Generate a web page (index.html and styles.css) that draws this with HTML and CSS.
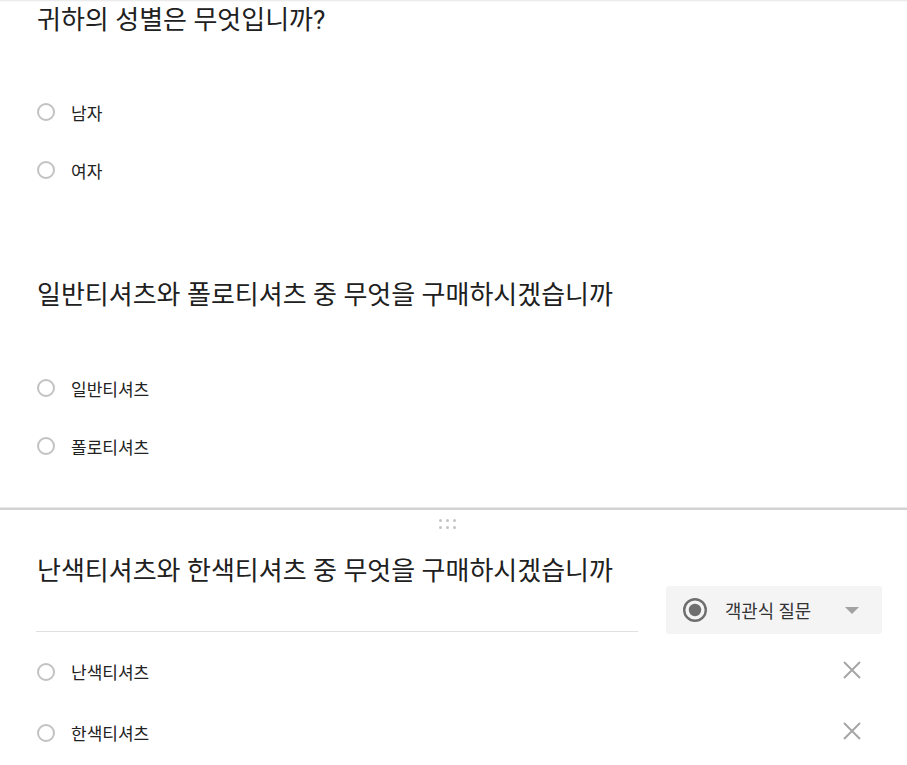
FILE: index.html
```html
<!DOCTYPE html>
<html lang="ko">
<head>
<meta charset="utf-8">
<title>설문</title>
<link rel="stylesheet" href="styles.css">
</head>
<body>
<div class="card card-top">
  <div class="question q1">
    <div class="q-title">귀하의 성별은 무엇입니까?</div>
    <div class="options">
      <div class="option"><span class="radio"></span><span class="label">남자</span></div>
      <div class="option"><span class="radio"></span><span class="label">여자</span></div>
    </div>
  </div>
  <div class="question q2">
    <div class="q-title">일반티셔츠와 폴로티셔츠 중 무엇을 구매하시겠습니까</div>
    <div class="options">
      <div class="option"><span class="radio"></span><span class="label">일반티셔츠</span></div>
      <div class="option"><span class="radio"></span><span class="label">폴로티셔츠</span></div>
    </div>
  </div>
</div>
<div class="divider"></div>
<div class="card card-active">
  <div class="handle">
    <span></span><span></span><span></span><span></span><span></span><span></span>
  </div>
  <div class="question q3">
    <div class="q-head">
      <div class="q-title-input">난색티셔츠와 한색티셔츠 중 무엇을 구매하시겠습니까</div>
      <div class="type-select">
        <svg class="type-icon" width="26" height="26" viewBox="0 0 26 26"><circle cx="13" cy="13" r="10.8" fill="none" stroke="#6f6f6f" stroke-width="2.4"/><circle cx="13" cy="13" r="6.2" fill="#6f6f6f"/></svg>
        <span class="type-label">객관식 질문</span>
        <svg class="type-arrow" width="14" height="7" viewBox="0 0 14 7"><path d="M0 0 L14 0 L7 7 Z" fill="#a2a2a2"/></svg>
      </div>
    </div>
    <div class="options edit">
      <div class="option"><span class="radio"></span><span class="label">난색티셔츠</span>
        <svg class="remove" width="24" height="24" viewBox="0 0 24 24"><path d="M4 4 L20 20 M20 4 L4 20" stroke="#a6a6a6" stroke-width="2" fill="none"/></svg>
      </div>
      <div class="option"><span class="radio"></span><span class="label">한색티셔츠</span>
        <svg class="remove" width="24" height="24" viewBox="0 0 24 24"><path d="M4 4 L20 20 M20 4 L4 20" stroke="#a6a6a6" stroke-width="2" fill="none"/></svg>
      </div>
    </div>
  </div>
</div>
</body>
</html>
```
FILE: styles.css
```css
html, body {
  margin: 0;
  padding: 0;
  background: #ffffff;
}
body {
  font-family: Roboto, "Noto Sans CJK KR", sans-serif;
  color: #212121;
  width: 907px;
  height: 765px;
  overflow: hidden;
}
.card-top {
  box-shadow: inset 0 3px 2px -2px rgba(0, 0, 0, 0.10);
  padding-bottom: 32px;
}
.question {
  padding-left: 37px;
}
.q-title, .q-title-input {
  font-size: 26px;
  line-height: 40px;
  color: #202020;
  white-space: nowrap;
}
.q1 .options {
  margin-top: 43px;
}
.q2 {
  margin-top: 76px;
}
.q2 .options {
  margin-top: 44px;
}
.option {
  display: flex;
  align-items: center;
  height: 58px;
}
.radio {
  box-sizing: border-box;
  width: 18px;
  height: 18px;
  border: 2px solid #c2c2c2;
  border-radius: 50%;
  flex: none;
}
.label {
  margin-left: 16px;
  font-size: 17px;
  color: #222;
}
.divider {
  height: 0;
  border-top: 1px solid #e8e8e8;
  border-bottom: 2px solid #d2d2d2;
}
.handle {
  display: grid;
  grid-template-columns: repeat(3, 3px);
  grid-auto-rows: 3px;
  column-gap: 4px;
  row-gap: 4px;
  margin-left: 439px;
  padding-top: 9px;
}
.handle span {
  background: #c4c4c4;
  border-radius: 50%;
}
.q3 {
  margin-top: 22px;
}
.q-head {
  display: flex;
  align-items: flex-start;
}
.q-title-input {
  width: 601px;
  margin-left: -1px;
  padding-left: 1px;
  padding-bottom: 40px;
  border-bottom: 1px solid #e0e0e0;
}
.type-select {
  display: flex;
  align-items: center;
  box-sizing: border-box;
  width: 216px;
  height: 48px;
  margin-left: 28px;
  margin-top: 35px;
  background: #f4f4f4;
  border-radius: 3px;
  padding-left: 16px;
}
.type-icon {
  flex: none;
}
.type-label {
  margin-left: 17px;
  font-size: 17.8px;
  color: #333;
}
.type-arrow {
  margin-left: 34px;
}
.options.edit {
  margin-top: 7px;
  margin-right: 43px;
}
.options.edit .option {
  height: 61px;
}
.remove {
  margin-left: auto;
  margin-top: -4px;
}
```
